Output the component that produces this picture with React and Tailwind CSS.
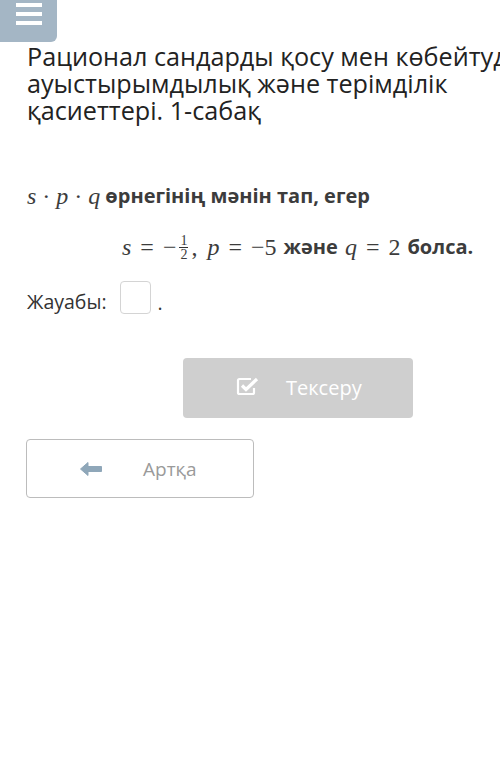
import React from "react";

function CheckIcon() {
  return (
    <svg width="24" height="20" viewBox="0 0 24 20" fill="none">
      <path d="M15 3H3.5a1.5 1.5 0 0 0-1.5 1.5v12A1.5 1.5 0 0 0 3.5 18h13a1.5 1.5 0 0 0 1.5-1.5V12" stroke="white" strokeWidth="2.2" />
      <path d="M6 9.5l4 4L21 3" stroke="white" strokeWidth="3.2" strokeLinejoin="miter" />
    </svg>
  );
}

function ArrowIcon() {
  return (
    <svg width="22" height="14" viewBox="0 0 22 14">
      <path d="M0.5 7L8 0.5V4.5H21.5V9.5H8V13.5Z" fill="#8fa7b9" strokeLinejoin="round" stroke="#8fa7b9" strokeWidth="1" />
    </svg>
  );
}

const serif = { fontFamily: '"Liberation Serif", "DejaVu Serif", serif' };
const M = ({ children }) => <span className="italic" style={serif}>{children}</span>;
const R = ({ children, className = "" }) => <span className={className} style={serif}>{children}</span>;

export default function App() {
  return (
    <div className="w-[500px] h-[763px] overflow-hidden bg-white relative" style={{ fontFamily: '"Open Sans", "Noto Sans", sans-serif' }}>
      <div className="w-[57px] h-[42px] bg-[#a4b6c5] rounded-br-[6px] flex flex-col gap-[5px] pt-[3px] pl-[16px]">
        <div className="w-[26px] h-[4px] bg-white" />
        <div className="w-[26px] h-[4px] bg-white" />
        <div className="w-[26px] h-[4px] bg-white" />
      </div>

      <div className="pl-[27px] mt-[1px] whitespace-nowrap text-[25.2px] leading-[27px] text-[#222]">
        Рационал сандарды қосу мен көбейтудің<br />
        ауыстырымдылық және терімділік<br />
        қасиеттері. 1-сабақ
      </div>

      <div className="pl-[27px] mt-[58px] h-[28px] text-[20px] leading-[28px] font-bold text-[#3c3c3c] whitespace-nowrap flex items-center">
        <span className="text-[24px] font-normal mr-[5px] flex items-center">
          <M>s</M><R className="mx-[6px]">·</R><M>p</M><R className="mx-[6px]">·</R><M>q</M>
        </span>
        <span>өрнегінің мәнін тап, егер</span>
      </div>

      <div className="pl-[122px] mt-[22px] h-[30px] text-[20px] leading-[28px] font-bold text-[#3c3c3c] whitespace-nowrap flex items-center">
        <span className="text-[24px] font-normal flex items-center">
          <M>s</M>
          <R className="mx-[9px]">=</R>
          <R>−</R>
          <span className="inline-flex flex-col items-center text-[14px] leading-[13px] mx-[3px]" style={serif}>
            <span>1</span>
            <span className="w-[9px] h-px bg-[#333]" />
            <span>2</span>
          </span>
          <R className="mr-[10px]">,</R>
          <M>p</M>
          <R className="mx-[9px]">=</R>
          <R>−5</R>
        </span>
        <span className="mx-[7px]">және</span>
        <span className="text-[24px] font-normal flex items-center">
          <M>q</M>
          <R className="mx-[9px]">=</R>
          <R>2</R>
        </span>
        <span className="ml-[7px]">болса.</span>
      </div>

      <div className="pl-[27px] mt-[16px] flex items-center text-[19.5px] text-[#333]">
        <span className="mt-[8px]">Жауабы:</span>
        <div className="ml-[13px] w-[31px] h-[33px] border border-[#d4d4d4] rounded-[4px]" />
        <span className="ml-[7px] mt-[10px]">.</span>
      </div>

      <div className="ml-[183px] mt-[41px] w-[230px] h-[60px] bg-[#cfcfcf] rounded-[4px] flex items-center text-white text-[20px]">
        <span className="ml-[53px] mt-[-4px]"><CheckIcon /></span>
        <span className="ml-[26px]">Тексеру</span>
      </div>

      <div className="ml-[26px] mt-[21px] w-[228px] h-[59px] border-[1.5px] border-[#bcbcbc] rounded-[4px] flex items-center text-[#9a9a9a] text-[19px]">
        <span className="ml-[53px] flex"><ArrowIcon /></span>
        <span className="ml-[41px]">Артқа</span>
      </div>
    </div>
  );
}
